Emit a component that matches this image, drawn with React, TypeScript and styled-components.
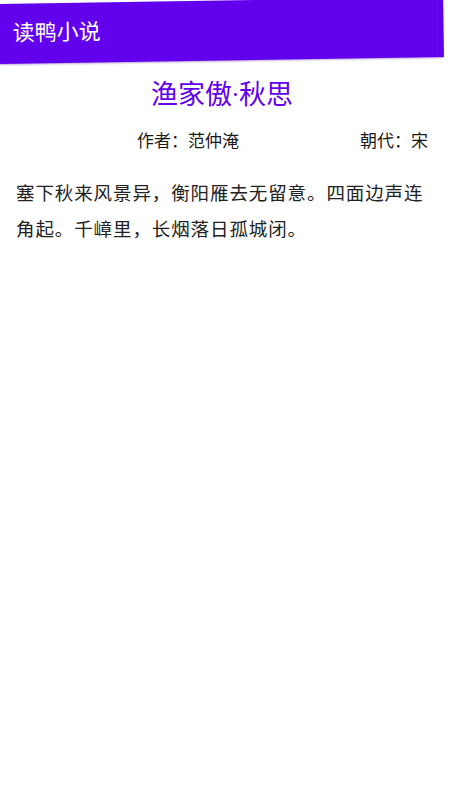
import React from "react";
import styled, { createGlobalStyle } from "styled-components";

const Global = createGlobalStyle`
  html, body { margin: 0; padding: 0; background: #ffffff; }
  body { font-family: "Roboto", "Noto Sans CJK SC", "Noto Sans", sans-serif; }
`;

const Page = styled.div`
  width: 444px;
  min-height: 800px;
  background: #ffffff;
  overflow: hidden;
  padding-top: 3.5px;
`;

const AppBar = styled.header`
  height: 60px;
  width: 444px;
  background: #6200ee;
  display: flex;
  align-items: center;
  padding-left: 13px;
  box-sizing: border-box;
  transform: rotate(-0.9deg);
  transform-origin: 0 100%;
  box-shadow: 0 1px 2px rgba(60, 0, 140, 0.35);
`;

const AppTitle = styled.h1`
  margin: 0;
  color: #ffffff;
  font-size: 22px;
  font-weight: 400;
  line-height: 30px;
`;

const PoemTitle = styled.h2`
  margin: 14px 0 0;
  text-align: center;
  color: #6200ee;
  font-size: 27px;
  font-weight: 400;
  line-height: 34px;
`;

const MetaRow = styled.div`
  margin-top: 17.5px;
  display: flex;
  align-items: center;
  padding: 0 16px;
  font-size: 17px;
  line-height: 24px;
  color: #1a1a1a;
`;

const MetaItem = styled.span<{ $grow?: boolean }>`
  flex: ${(p) => (p.$grow ? 1 : "none")};
  text-align: ${(p) => (p.$grow ? "center" : "right")};
`;

const Body = styled.p`
  margin: 23px 0 0;
  padding: 0 16px;
  font-size: 18.5px;
  letter-spacing: 0.9px;
  line-height: 36px;
  color: #222222;
`;

export default function App() {
  return (
    <>
      <Global />
      <Page>
        <AppBar>
          <AppTitle>读鸭小说</AppTitle>
        </AppBar>
        <PoemTitle>渔家傲·秋思</PoemTitle>
        <MetaRow>
          <MetaItem $grow>作者：范仲淹</MetaItem>
          <MetaItem>朝代：宋</MetaItem>
        </MetaRow>
        <Body>
          塞下秋来风景异，衡阳雁去无留意。四面边声连角起。千嶂里，长烟落日孤城闭。
        </Body>
      </Page>
    </>
  );
}
